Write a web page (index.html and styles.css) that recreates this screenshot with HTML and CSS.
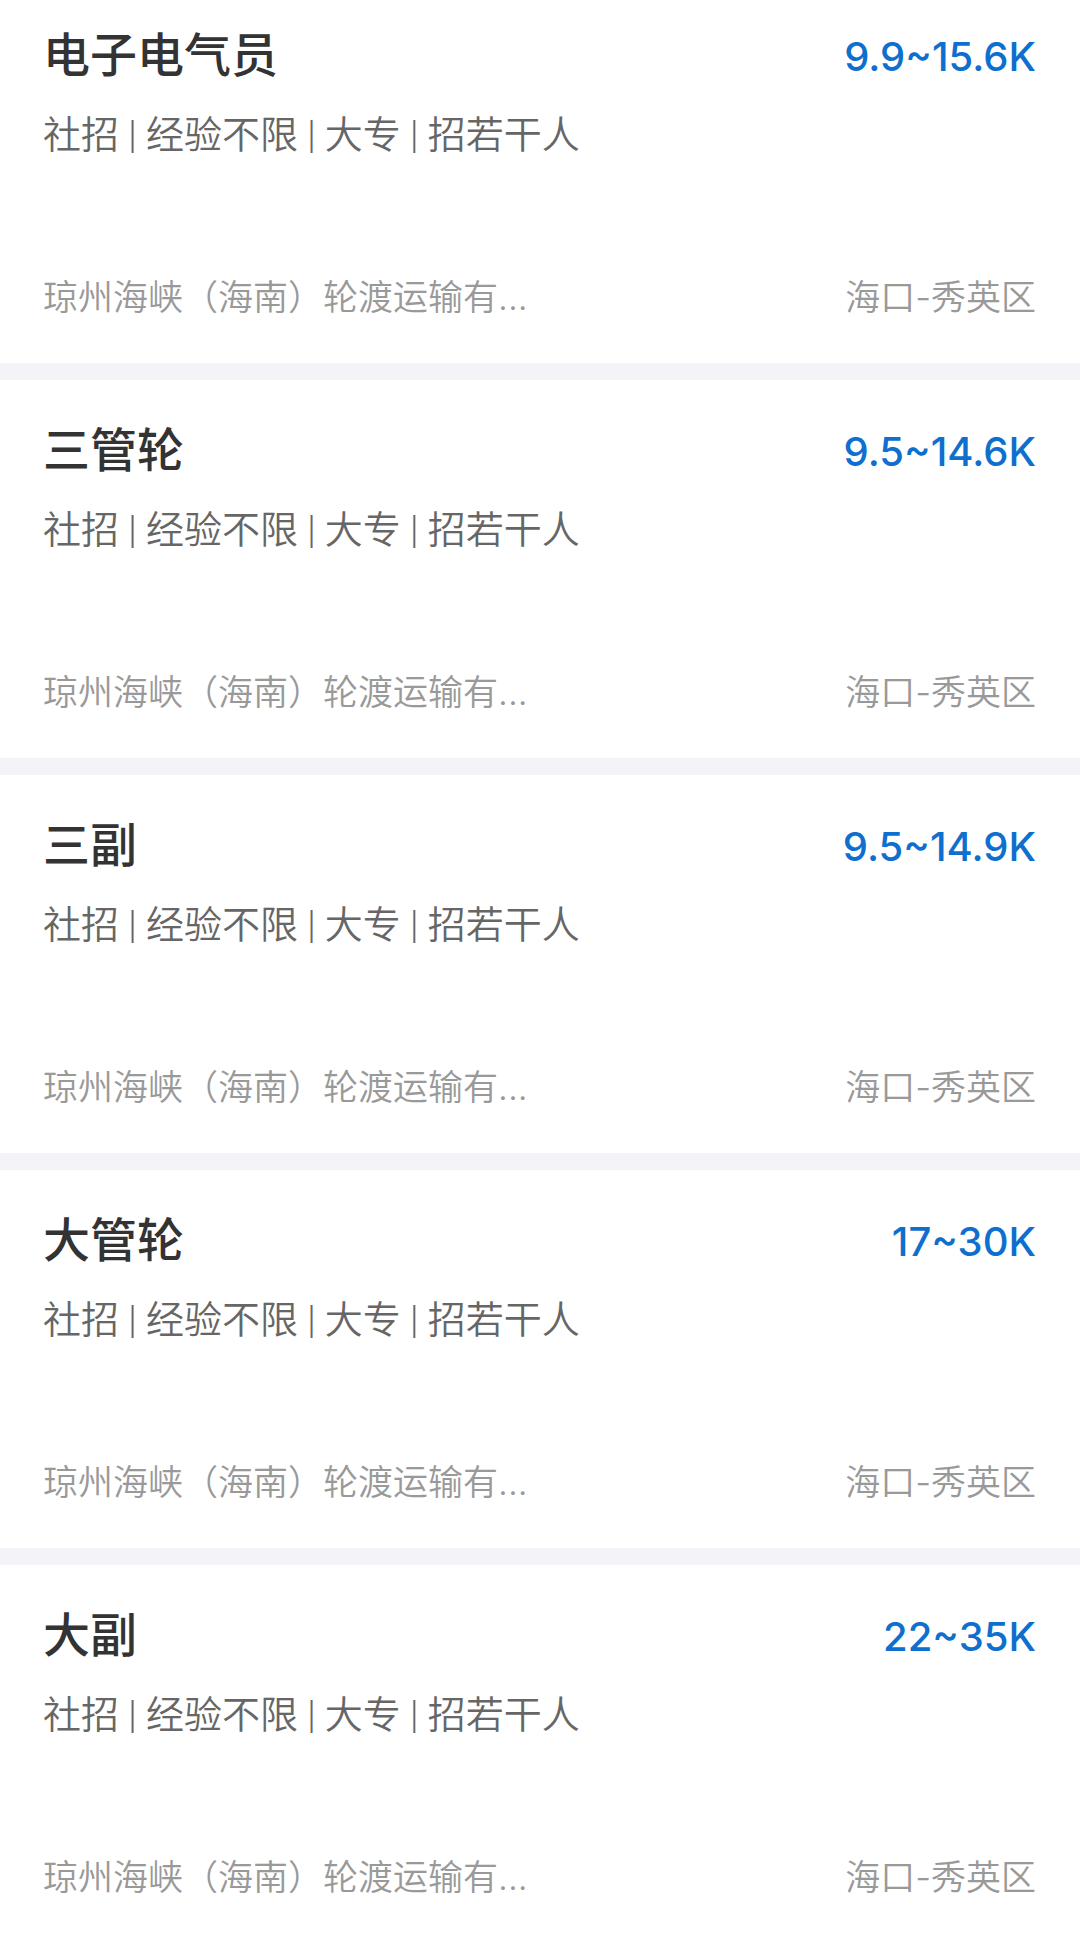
FILE: index.html
```html
<!DOCTYPE html>
<html lang="zh-Hans">
<head>
    <meta charset="UTF-8">
    <meta name="viewport" content="width=device-width, initial-scale=1.0">
    <title>职位列表</title>
    <link rel="stylesheet" href="styles.css">
</head>
<body>
    <main class="job-list">
        <article class="job">
            <div class="row">
                <h2 class="title">电子电气员</h2>
                <span class="salary">9.9~15.6K</span>
            </div>
            <p class="tags">社招 | 经验不限 | 大专 | 招若干人</p>
            <div class="row footer">
                <span class="company">琼州海峡（海南）轮渡运输有...</span>
                <span class="place">海口-秀英区</span>
            </div>
        </article>
        <article class="job">
            <div class="row">
                <h2 class="title">三管轮</h2>
                <span class="salary">9.5~14.6K</span>
            </div>
            <p class="tags">社招 | 经验不限 | 大专 | 招若干人</p>
            <div class="row footer">
                <span class="company">琼州海峡（海南）轮渡运输有...</span>
                <span class="place">海口-秀英区</span>
            </div>
        </article>
        <article class="job">
            <div class="row">
                <h2 class="title">三副</h2>
                <span class="salary">9.5~14.9K</span>
            </div>
            <p class="tags">社招 | 经验不限 | 大专 | 招若干人</p>
            <div class="row footer">
                <span class="company">琼州海峡（海南）轮渡运输有...</span>
                <span class="place">海口-秀英区</span>
            </div>
        </article>
        <article class="job">
            <div class="row">
                <h2 class="title">大管轮</h2>
                <span class="salary">17~30K</span>
            </div>
            <p class="tags">社招 | 经验不限 | 大专 | 招若干人</p>
            <div class="row footer">
                <span class="company">琼州海峡（海南）轮渡运输有...</span>
                <span class="place">海口-秀英区</span>
            </div>
        </article>
        <article class="job">
            <div class="row">
                <h2 class="title">大副</h2>
                <span class="salary">22~35K</span>
            </div>
            <p class="tags">社招 | 经验不限 | 大专 | 招若干人</p>
            <div class="row footer">
                <span class="company">琼州海峡（海南）轮渡运输有...</span>
                <span class="place">海口-秀英区</span>
            </div>
        </article>
    </main>
</body>
</html>
```
FILE: styles.css
```css
body {
    margin: 0;
    background-color: #f4f4f8;
    font-family: Inter, "Noto Sans CJK SC", sans-serif;
}
.job-list {
    display: flex;
    flex-direction: column;
    gap: 17px;
}
.job {
    padding: 41px 44px 41px 43px;
    background: white;
}
.job:first-child {
    padding-top: 26px;
}
.row {
    display: flex;
    justify-content: space-between;
    align-items: flex-start;
}
.title {
    margin: 0;
    font-size: 47px;
    font-weight: 500;
    line-height: 58px;
    color: #333;
}
.salary {
    font-size: 40px;
    font-weight: 500;
    line-height: 62px;
    color: #0f6fce;
}
.tags {
    margin: 19px 0 0;
    font-family: Roboto, "Noto Sans CJK SC", sans-serif;
    font-size: 38px;
    font-weight: 350;
    line-height: 56px;
    color: #666;
}
.footer {
    margin-top: 109px;
    font-size: 35px;
    font-weight: 350;
    line-height: 50px;
    color: #999;
}
```
